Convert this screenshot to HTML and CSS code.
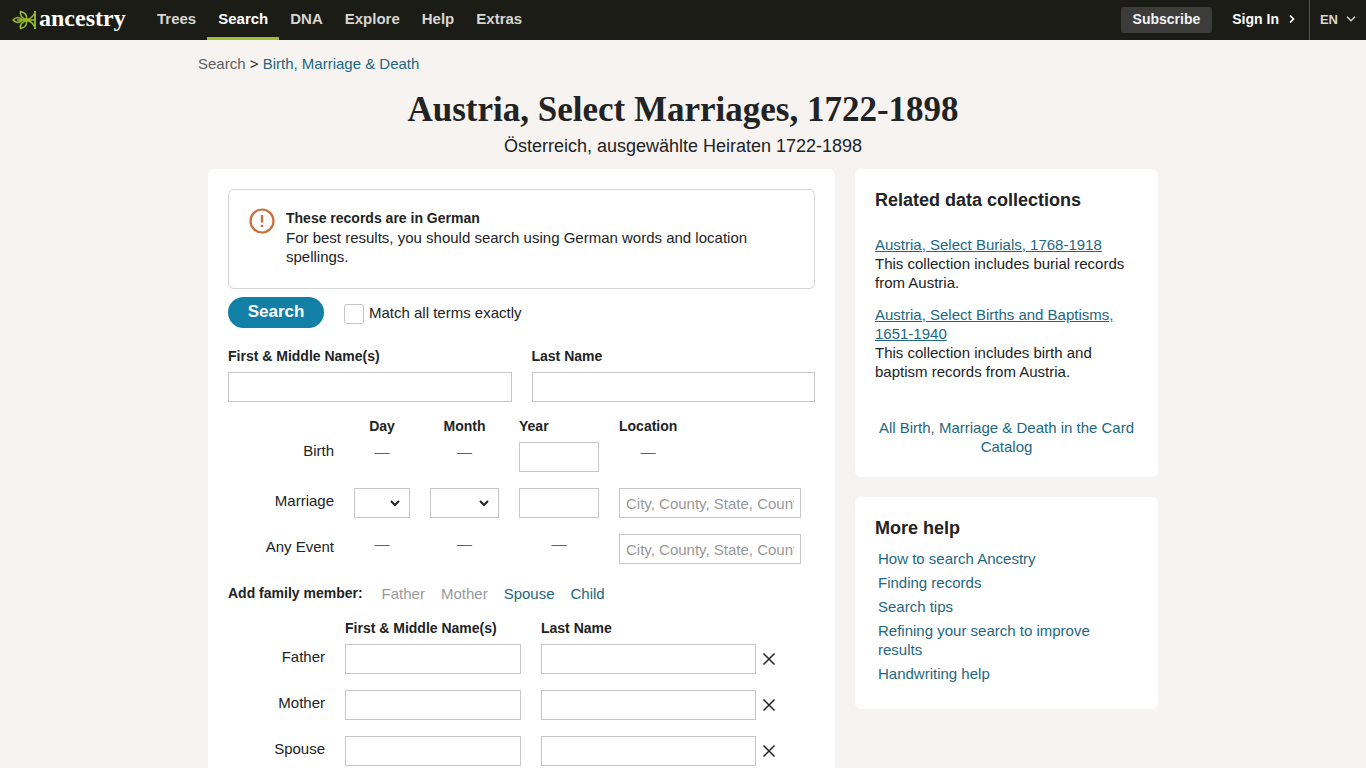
FILE: index.html
```html
<!DOCTYPE html>
<html lang="en">
  <head>
    <meta charset="UTF-8" />
    <meta name="viewport" content="width=device-width, initial-scale=1.0" />
    <title>Austria, Select Marriages, 1722-1898 | Ancestry</title>
    <link rel="stylesheet" href="styles.css">
  </head>
  <body>
    <!-- Header -->
    <header class="topBar">
      <a class="logo" href="#">
        <svg class="logoLeaf" viewBox="0 0 24 20" fill="none" stroke="#9cbe30" stroke-width="1.5" aria-hidden="true">
          <path d="M23 1v18" stroke-width="1.8" />
          <path d="M1 10c3-3.200 6.500-3.200 9.500 0-3 3.200-6.500 3.200-9.500 0z" />
          <path d="M8.500 1.500c-.8 4 1 6.500 6 8 .8-4-1.500-7-6-8z" />
          <path d="M8.500 18.500c-.8-4 1-6.500 6-8 .8 4-1.500 7-6 8z" />
          <path d="M5 10h18M15 9.500c3-.5 6-3 7.500-6M15 10.500c3 .5 6 3 7.500 6" />
        </svg>
        <span class="logoText">ancestry</span>
      </a>
      <nav class="mainNav">
        <a href="#">Trees</a>
        <a class="active" href="#">Search</a>
        <a href="#">DNA</a>
        <a href="#">Explore</a>
        <a href="#">Help</a>
        <a href="#">Extras</a>
      </nav>
      <div class="account">
        <a class="subscribe" href="#">Subscribe</a>
        <a class="signIn" href="#">Sign In
          <svg width="6" height="8" viewBox="0 0 6 8" fill="none" stroke="currentColor" stroke-width="1.6"><path d="M1 .5L4.500 4 1 7.500" /></svg>
        </a>
        <button class="language" type="button">EN
          <svg width="10" height="6" viewBox="0 0 10 6" fill="none" stroke="currentColor" stroke-width="1.400"><path d="M1 .8l4 4 4-4" /></svg>
        </button>
      </div>
    </header>

    <main class="page">
      <p class="breadcrumb"><a class="parent" href="#">Search</a> &gt; <a href="#">Birth, Marriage &amp; Death</a></p>
      <h1>Austria, Select Marriages, 1722-1898</h1>
      <p class="subtitle" lang="de">Österreich, ausgewählte Heiraten 1722-1898</p>

      <div class="columns">
        <form class="card searchForm">
          <div class="notice">
            <svg class="noticeIcon" viewBox="0 0 26 26" fill="none" stroke="#c8703c" aria-hidden="true">
              <circle cx="13" cy="13" r="11.500" stroke-width="2.200" />
              <path d="M13 7v7.500M13 16.800v2.200" stroke-width="2.400" />
            </svg>
            <div>
              <strong>These records are in German</strong>
              <p>For best results, you should search using German words and location spellings.</p>
            </div>
          </div>

          <div class="searchRow">
            <button class="searchButton" type="submit">Search</button>
            <label class="exact"><input type="checkbox" /> Match all terms exactly</label>
          </div>

          <div class="names">
            <div>
              <label for="firstName">First &amp; Middle Name(s)</label>
              <input type="text" id="firstName" />
            </div>
            <div>
              <label for="lastName">Last Name</label>
              <input type="text" id="lastName" />
            </div>
          </div>

          <!-- Life events -->
          <div class="events">
            <span></span>
            <span class="head center">Day</span>
            <span class="head center">Month</span>
            <span class="head">Year</span>
            <span class="head">Location</span>

            <label class="rowLabel short" for="birthYear">Birth</label>
            <span class="dash">—</span>
            <span class="dash">—</span>
            <input type="text" id="birthYear" />
            <span class="dash locationDash">—</span>

            <label class="rowLabel" for="marriageYear">Marriage</label>
            <select aria-label="Marriage day"><option></option><option>1</option><option>2</option></select>
            <select aria-label="Marriage month"><option></option><option>Jan</option><option>Feb</option></select>
            <input type="text" id="marriageYear" />
            <input type="text" aria-label="Marriage location" placeholder="City, County, State, Country" />

            <label class="rowLabel" for="anyLocation">Any Event</label>
            <span class="dash">—</span>
            <span class="dash">—</span>
            <span class="dash">—</span>
            <input type="text" id="anyLocation" placeholder="City, County, State, Country" />
          </div>

          <!-- Family members -->
          <div class="addFamily">
            <strong>Add family member:</strong>
            <button type="button" disabled>Father</button>
            <button type="button" disabled>Mother</button>
            <button type="button">Spouse</button>
            <button type="button">Child</button>
          </div>

          <div class="family">
            <span></span>
            <span class="head">First &amp; Middle Name(s)</span>
            <span class="head">Last Name</span>
            <span></span>

            <label class="rowLabel" for="fatherFirst">Father</label>
            <input type="text" id="fatherFirst" />
            <input type="text" aria-label="Father last name" />
            <button class="remove" type="button" aria-label="Remove father">
              <svg viewBox="0 0 14 14"><path d="M1.500 1.500l11 11M12.500 1.500l-11 11" /></svg>
            </button>

            <label class="rowLabel" for="motherFirst">Mother</label>
            <input type="text" id="motherFirst" />
            <input type="text" aria-label="Mother last name" />
            <button class="remove" type="button" aria-label="Remove mother">
              <svg viewBox="0 0 14 14"><path d="M1.500 1.500l11 11M12.500 1.500l-11 11" /></svg>
            </button>

            <label class="rowLabel" for="spouseFirst">Spouse</label>
            <input type="text" id="spouseFirst" />
            <input type="text" aria-label="Spouse last name" />
            <button class="remove" type="button" aria-label="Remove spouse">
              <svg viewBox="0 0 14 14"><path d="M1.500 1.500l11 11M12.500 1.500l-11 11" /></svg>
            </button>
          </div>
        </form>

        <aside class="sidebar">
          <section class="card related">
            <h2>Related data collections</h2>
            <p><a href="#">Austria, Select Burials, 1768-1918</a><br />This collection includes burial records from Austria.</p>
            <p><a href="#">Austria, Select Births and Baptisms, 1651-1940</a><br />This collection includes birth and baptism records from Austria.</p>
            <a class="catalog" href="#">All Birth, Marriage &amp; Death in the Card Catalog</a>
          </section>
          <section class="card help">
            <h2>More help</h2>
            <ul>
              <li><a href="#">How to search Ancestry</a></li>
              <li><a href="#">Finding records</a></li>
              <li><a href="#">Search tips</a></li>
              <li><a href="#">Refining your search to improve results</a></li>
              <li><a href="#">Handwriting help</a></li>
            </ul>
          </section>
        </aside>
      </div>
    </main>
  </body>
</html>
```
FILE: styles.css
```css
* {
  box-sizing: border-box;
}
body {
  margin: 0;
  background-color: #f6f3f0;
  color: #212324;
  font-family: "Liberation Sans", Arial, sans-serif;
  font-size: 15px;
  line-height: 19px;
}
p,
h1,
h2 {
  margin: 0;
}
a {
  color: #1d6880;
  text-decoration: none;
}
a:hover {
  text-decoration: underline;
}
button {
  padding: 0;
  border: none;
  background: none;
  font: inherit;
  cursor: pointer;
}

/* Header */
.topBar {
  display: flex;
  height: 40px;
  padding-left: 12px;
  background-color: #1c1c17;
}
.logo {
  display: flex;
  align-items: center;
  gap: 3px;
  width: 134px;
}
.logoLeaf {
  width: 24px;
  height: 20px;
}
.logoText {
  padding-bottom: 4px;
  color: #fff;
  font-family: "Liberation Serif", serif;
  font-size: 24px;
  font-weight: bold;
  line-height: 24px;
}
.mainNav {
  display: flex;
  flex: 1;
}
.mainNav a {
  padding: 9px 11px 0;
  border-bottom: 3px solid transparent;
  color: #d6d6d2;
  font-weight: bold;
}
.mainNav .active {
  border-color: #9cbe30;
  color: #fff;
}
.account {
  display: flex;
  align-items: center;
  color: #fff;
  font-size: 14px;
  font-weight: bold;
}
.subscribe {
  padding: 3px 12px 4px;
  border-radius: 3px;
  background-color: #3c3c3b;
  color: #f3f3f3;
}
.signIn {
  display: flex;
  align-items: center;
  gap: 10px;
  padding: 0 14px 2px 20px;
  color: #fff;
}
.language {
  display: flex;
  align-items: center;
  gap: 8px;
  height: 40px;
  padding: 0 10px 2px;
  border-left: 1px solid #55554f;
  color: #d6d6d2;
  font-size: 13px;
}

/* Page head */
.page {
  max-width: 970px;
  margin: 0 auto;
  padding: 14px 10px 20px;
}
.breadcrumb {
  margin-left: -10px;
}
.breadcrumb .parent {
  color: #5f6062;
}
h1 {
  padding-top: 17px;
  font-family: "Liberation Serif", serif;
  font-size: 35px;
  line-height: 40px;
  text-align: center;
}
.subtitle {
  margin: 4px 0 11px;
  font-size: 18px;
  line-height: 24px;
  text-align: center;
}
.columns {
  display: grid;
  grid-template-columns: 627fr 303fr;
  gap: 20px;
  align-items: start;
}
.card {
  padding: 20px;
  border-radius: 6px;
  background-color: #fff;
}

/* Search form */
.notice {
  display: flex;
  gap: 11px;
  padding: 18px 20px 22px;
  border: 1px solid #d4d5d6;
  border-radius: 6px;
}
.notice strong {
  font-size: 14px;
}
.notice p {
  padding-right: 20px;
}
.noticeIcon {
  flex: none;
  width: 26px;
  height: 26px;
}
.searchRow {
  display: flex;
  align-items: center;
  gap: 20px;
  margin: 8px 0 18px;
}
.searchButton {
  width: 96px;
  height: 31px;
  padding-bottom: 2px;
  border-radius: 16px;
  background-color: #117fa6;
  color: #fff;
  font-size: 17px;
  font-weight: bold;
}
.exact {
  display: flex;
  align-items: center;
  gap: 5px;
}
.exact input {
  appearance: none;
  width: 20px;
  height: 20px;
  margin: 2px 0 0;
  border: 1px solid #c5c6c7;
  border-radius: 3px;
}
.exact input:checked {
  background-color: #117fa6;
}
.names {
  display: grid;
  grid-template-columns: 1fr 1fr;
  gap: 20px;
}
.names label,
.head {
  display: block;
  font-size: 14px;
  font-weight: bold;
  line-height: 20px;
}
.names label {
  margin-bottom: 6px;
}
input[type="text"],
select {
  display: block;
  width: 100%;
  min-width: 0;
  height: 30px;
  padding: 0 6px;
  border: 1px solid #c5c6c7;
  border-radius: 0;
  background-color: #fff;
  color: #212324;
  font: inherit;
}
select {
  appearance: none;
  background-image: url("data:image/svg+xml,%3Csvg xmlns='http://www.w3.org/2000/svg' width='10' height='7' fill='none' stroke='%23212324' stroke-width='2'%3E%3Cpath d='M1 1l4 4 4-4'/%3E%3C/svg%3E");
  background-position: right 9px center;
  background-repeat: no-repeat;
}
input::placeholder {
  color: #999;
}
.events {
  display: grid;
  grid-template-columns: 106fr 56fr 69fr 80fr 182fr;
  gap: 16px 20px;
  margin: 14px 14px 20px 0;
}
.family {
  display: grid;
  grid-template-columns: 97fr 176fr 215fr 14px;
  gap: 16px 20px;
  margin: 15px 25px 14px 0;
}
.head {
  margin-bottom: -10px;
}
.center,
.dash {
  text-align: center;
}
.dash {
  color: #5f6062;
  line-height: 20px;
}
.locationDash {
  width: 58px;
}
.rowLabel {
  line-height: 26px;
  text-align: right;
}
.short {
  line-height: 18px;
}
.addFamily {
  display: flex;
  gap: 16px;
}
.addFamily strong {
  margin-right: 3px;
  font-size: 14px;
}
.addFamily button {
  color: #1d6880;
}
.addFamily button:disabled {
  color: #98999b;
  cursor: default;
}
.remove {
  width: 14px;
  height: 30px;
  margin-left: -14px;
}
.remove svg {
  display: block;
  width: 14px;
  height: 14px;
  stroke: #212324;
  stroke-width: 1.5;
}

/* Sidebar */
.sidebar {
  display: grid;
  gap: 20px;
}
h2 {
  font-size: 18px;
  line-height: 22px;
}
.related h2 {
  margin-bottom: 24px;
}
.related p {
  margin-bottom: 13px;
}
.related p a {
  text-decoration: underline;
}
.catalog {
  display: block;
  padding: 24px 0 1px;
  text-align: center;
}
.help ul {
  margin: 10px 0 6px;
  padding: 0 40px 0 3px;
  list-style: none;
}
.help li {
  margin-bottom: 5px;
}
```
